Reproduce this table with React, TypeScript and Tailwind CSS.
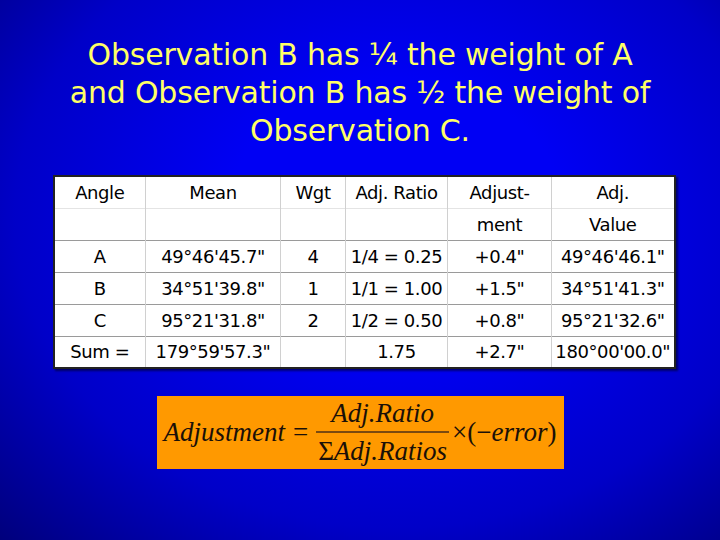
import React from "react";

const rows = [
  ["A", "49°46'45.7\"", "4", "1/4 = 0.25", "+0.4\"", "49°46'46.1\""],
  ["B", "34°51'39.8\"", "1", "1/1 = 1.00", "+1.5\"", "34°51'41.3\""],
  ["C", "95°21'31.8\"", "2", "1/2 = 0.50", "+0.8\"", "95°21'32.6\""],
  ["Sum =", "179°59'57.3\"", "", "1.75", "+2.7\"", "180°00'00.0\""],
];

const widths = ["w-[92px]", "w-[135px]", "w-[65px]", "w-[102px]", "w-[104px]", "w-[123px]"];

const App: React.FC = () => {
  return (
    <div className="w-[720px] h-[540px] overflow-hidden bg-[radial-gradient(ellipse_at_55%_40%,#0000f4_30%,#0000c8_68%,#00007c_100%)] flex flex-col items-center">
      {/* title */}
      <h1 className="mt-[36px] text-center text-[#ffff66] text-[30px] leading-[38px] font-['Comic_Sans_MS','DejaVu_Sans',sans-serif] tracking-[-0.2px]">
        Observation B has ¼ the weight of A
        <br />
        and Observation B has ½ the weight of
        <br />
        Observation C.
      </h1>

      {/* table */}
      <table className="mt-[25px] ml-[8px] table-fixed border-collapse bg-white border-2 border-[#222] shadow-[2px_2px_2px_rgba(0,0,0,0.5)] text-black text-[18px] font-['Comic_Sans_MS','DejaVu_Sans',sans-serif] tracking-[-0.4px]">
        <tbody>
          <tr className="h-[32px] border-b border-[#e4e4e4]">
            {["Angle", "Mean", "Wgt", "Adj. Ratio", "Adjust-", "Adj."].map((h, i) => (
              <td key={i} className={`${widths[i]} text-center p-0 border-r border-[#d0d0d0] last:border-r-0`}>
                {h}
              </td>
            ))}
          </tr>
          <tr className="h-[32px] border-b border-[#9a9a9a]">
            {["", "", "", "", "ment", "Value"].map((h, i) => (
              <td key={i} className="text-center p-0 border-r border-[#d0d0d0] last:border-r-0">
                {h}
              </td>
            ))}
          </tr>
          {rows.map((r, ri) => (
            <tr key={ri} className={`h-[32px] ${ri < rows.length - 1 ? "border-b border-[#9a9a9a]" : ""}`}>
              {r.map((c, ci) => (
                <td key={ci} className="text-center p-0 whitespace-nowrap border-r border-[#d0d0d0] last:border-r-0">
                  {c}
                </td>
              ))}
            </tr>
          ))}
        </tbody>
      </table>

      {/* formula */}
      <div className="mt-[27px] w-[407px] h-[73px] bg-[#ff9900] flex items-center justify-center text-[#1a1008] font-['Liberation_Serif','Times_New_Roman',serif] text-[27px] leading-none">
        <span className="italic">Adjustment</span>
        <span className="mx-[8px]">=</span>
        <span className="flex flex-col items-center">
          <span className="italic px-[2px] pb-[4px]">Adj.Ratio</span>
          <span className="w-full h-[1.5px] bg-[#7a4a10]" />
          <span className="px-[2px] pt-[5px]">
            Σ<span className="italic">Adj.Ratios</span>
          </span>
        </span>
        <span className="ml-[3px]">×(−</span>
        <span className="italic">error</span>
        <span>)</span>
      </div>
    </div>
  );
};

export default App;
